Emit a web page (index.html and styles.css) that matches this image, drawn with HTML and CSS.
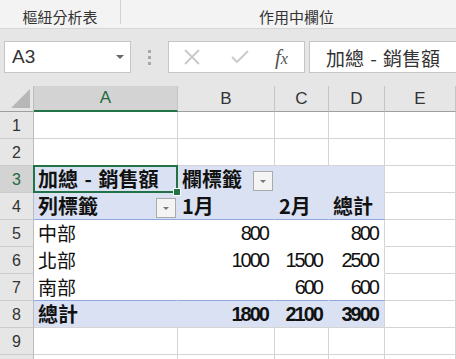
FILE: index.html
```html
<!DOCTYPE html>
<html lang="zh-Hant">
<head>
  <meta charset="UTF-8">
  <title>樞紐分析表</title>
  <link rel="stylesheet" href="styles.css">
</head>
<body>
  <div class="tabs">
    <div class="tab tab-pivot">樞紐分析表</div>
    <div class="tab tab-active">作用中欄位</div>
  </div>

  <div class="formula-bar">
    <div class="name-box">
      <span>A3</span>
      <span class="caret"></span>
    </div>
    <div class="grip"><i></i><i></i><i></i></div>
    <div class="fx-box">
      <svg class="ico" width="18" height="18" viewBox="0 0 18 18"><path d="M2 2 L16 16 M16 2 L2 16" stroke="#c8c8c8" stroke-width="1.8" fill="none"/></svg>
      <svg class="ico" width="18" height="16" viewBox="0 0 18 16"><path d="M1 8 L6 13 L17 2" stroke="#c8c8c8" stroke-width="1.8" fill="none"/></svg>
      <span class="fx"><i>f</i><i class="x">x</i></span>
    </div>
    <div class="formula-input">加總 - 銷售額</div>
  </div>

  <div class="sheet">
    <!-- column headers -->
    <div class="corner"><svg width="19" height="19" viewBox="0 0 19 19"><polygon points="19,0 19,19 0,19" fill="#b7b7b7"/></svg></div>
    <div class="col-head sel">A</div>
    <div class="col-head">B</div>
    <div class="col-head">C</div>
    <div class="col-head">D</div>
    <div class="col-head">E</div>

    <!-- row 1 -->
    <div class="row-head">1</div>
    <div class="cell"></div><div class="cell"></div><div class="cell"></div><div class="cell"></div><div class="cell"></div>

    <!-- row 2 -->
    <div class="row-head">2</div>
    <div class="cell"></div><div class="cell"></div><div class="cell"></div><div class="cell"></div><div class="cell"></div>

    <!-- row 3 -->
    <div class="row-head sel">3</div>
    <div class="cell pv band bold active spaced">加總 - 銷售額</div>
    <div class="cell pv band bold">欄標籤<span class="filter"></span></div>
    <div class="cell pv band"></div>
    <div class="cell pv band edge"></div>
    <div class="cell"></div>

    <!-- row 4 -->
    <div class="row-head">4</div>
    <div class="cell pv band bold line">列標籤<span class="filter"></span></div>
    <div class="cell pv band bold line">1月</div>
    <div class="cell pv band bold line">2月</div>
    <div class="cell pv band bold line edge">總計</div>
    <div class="cell"></div>

    <!-- row 5 -->
    <div class="row-head">5</div>
    <div class="cell pv">中部</div>
    <div class="cell pv num">800</div>
    <div class="cell pv num"></div>
    <div class="cell pv num edge">800</div>
    <div class="cell"></div>

    <!-- row 6 -->
    <div class="row-head">6</div>
    <div class="cell pv">北部</div>
    <div class="cell pv num">1000</div>
    <div class="cell pv num">1500</div>
    <div class="cell pv num edge">2500</div>
    <div class="cell"></div>

    <!-- row 7 -->
    <div class="row-head">7</div>
    <div class="cell pv line">南部</div>
    <div class="cell pv num line"></div>
    <div class="cell pv num line">600</div>
    <div class="cell pv num line edge">600</div>
    <div class="cell"></div>

    <!-- row 8 -->
    <div class="row-head">8</div>
    <div class="cell pv band bold total">總計</div>
    <div class="cell pv band bold num total">1800</div>
    <div class="cell pv band bold num total">2100</div>
    <div class="cell pv band bold num total edge">3900</div>
    <div class="cell"></div>

    <!-- row 9 -->
    <div class="row-head">9</div>
    <div class="cell"></div><div class="cell"></div><div class="cell"></div><div class="cell"></div><div class="cell"></div>

    <!-- row 10, only its top edge shows -->
    <div class="row-head"></div>
    <div class="cell"></div><div class="cell"></div><div class="cell"></div><div class="cell"></div><div class="cell"></div>
  </div>
</body>
</html>
```

FILE: styles.css
```css
html, body {
  margin: 0;
  padding: 0;
}
body {
  width: 456px;
  height: 359px;
  overflow: hidden;
  background-color: #e6e6e6;
  font-family: "Noto Sans CJK TC", "Liberation Sans", sans-serif;
  color: #222;
}
.tabs {
  height: 28px;
  display: flex;
  align-items: flex-start;
  background-color: #f3f3f3;
  border-bottom: 1px solid #d6d6d6;
}
.tab {
  font-size: 15px;
  line-height: 16px;
  color: #333;
  padding-top: 9px;
  text-align: center;
  box-sizing: border-box;
}
.tab-pivot {
  width: 121px;
  height: 24px;
  border-right: 1px solid #d2d2d2;
}
.tab-active {
  flex: 1;
  padding-left: 16px;
}
.formula-bar {
  display: flex;
  align-items: center;
  height: 32px;
  padding: 12px 0 13px 4px;
}
.name-box, .fx-box, .formula-input {
  height: 32px;
  box-sizing: border-box;
  background-color: #fff;
  border: 1px solid #c6c6c6;
  display: flex;
  align-items: center;
}
.name-box {
  width: 127px;
  padding: 0 6px 0 7px;
  justify-content: space-between;
  font-family: "Liberation Sans", sans-serif;
  font-size: 19px;
  color: #333;
}
.caret {
  width: 0;
  height: 0;
  border-left: 4px solid transparent;
  border-right: 4px solid transparent;
  border-top: 4px solid #666;
}
.grip {
  width: 37px;
  display: flex;
  flex-direction: column;
  align-items: center;
  gap: 3px;
}
.grip i {
  width: 3px;
  height: 3px;
  background-color: #a8a8a8;
}
.fx-box {
  width: 137px;
  padding-left: 14px;
  gap: 30px;
}
.fx {
  font-family: "Liberation Serif", serif;
  color: #555;
  font-size: 21px;
  margin-left: -4px;
}
.fx i {
  font-style: italic;
}
.fx .x {
  font-size: 16px;
}
.formula-input {
  flex: 1;
  margin-left: 4px;
  padding-left: 16px;
  border-right: none;
  font-size: 19px;
  word-spacing: 2px;
  color: #333;
}
.sheet {
  display: grid;
  grid-template-columns: 34px 144px 97px 54px 56px 71px;
  grid-template-rows: 26px repeat(10, 27px);
  background-color: #fff;
}
.corner {
  background-color: #e6e6e6;
  border-right: 1px solid #bcbcbc;
  border-bottom: 1px solid #9e9e9e;
  display: flex;
  align-items: flex-end;
  justify-content: flex-end;
  padding: 0 3px 3px 0;
}
.col-head {
  background-color: #e6e6e6;
  border-right: 1px solid #c4c4c4;
  border-bottom: 1px solid #9e9e9e;
  display: flex;
  align-items: center;
  justify-content: center;
  font-family: "Liberation Sans", sans-serif;
  font-size: 17px;
  color: #333;
}
.col-head.sel {
  background-color: #d3d3d3;
  border-bottom: 2px solid #217346;
  color: #1d6a3f;
}
.row-head {
  background-color: #e6e6e6;
  border-right: 1px solid #bcbcbc;
  border-bottom: 1px solid #cbcbcb;
  display: flex;
  align-items: center;
  justify-content: center;
  padding-top: 2px;
  font-family: "Liberation Sans", sans-serif;
  font-size: 16px;
  color: #333;
}
.row-head.sel {
  background-color: #d3d3d3;
  color: #1d6a3f;
}
.corner, .col-head, .row-head, .cell {
  box-sizing: border-box;
}
.cell {
  position: relative;
  border-right: 1px solid #d4d4d4;
  border-bottom: 1px solid #d4d4d4;
  display: flex;
  align-items: flex-end;
  padding: 0 4px 1px 4px;
  font-size: 19px;
  line-height: 24px;
  color: #111;
  white-space: nowrap;
}
.cell.spaced {
  word-spacing: 2px;
}
.cell.pv {
  border-right-color: #fff;
  border-bottom-color: #fff;
}
.cell.band {
  background-color: #d9e1f2;
  border-right-color: #d9e1f2;
  border-bottom-color: #d9e1f2;
}
.cell.edge {
  border-right-color: #d4d4d4;
}
.cell.line {
  border-bottom-color: #8ea9db;
}
.cell.total {
  border-bottom-color: #d4d4d4;
}
.cell.bold {
  font-weight: 700;
  font-size: 20px;
}
.cell.num {
  justify-content: flex-end;
  font-family: "Liberation Sans", sans-serif;
  font-size: 20px;
  letter-spacing: -2px;
  padding-right: 6px;
}
.cell.active::after {
  content: "";
  position: absolute;
  top: -1px;
  left: -1px;
  right: -1px;
  bottom: -1px;
  border: 2px solid #217346;
}
.cell.active::before {
  content: "";
  position: absolute;
  right: -4px;
  bottom: -4px;
  width: 6px;
  height: 6px;
  background-color: #217346;
  border: 1px solid #fff;
  z-index: 2;
}
.filter {
  margin-left: auto;
  margin-right: -3px;
  width: 20px;
  height: 20px;
  box-sizing: border-box;
  border: 1px solid #aaa;
  background-color: #f4f4f4;
  display: flex;
  align-items: center;
  justify-content: center;
}
.filter::after {
  content: "";
  border-left: 3px solid transparent;
  border-right: 3px solid transparent;
  border-top: 3px solid #777;
}
```
